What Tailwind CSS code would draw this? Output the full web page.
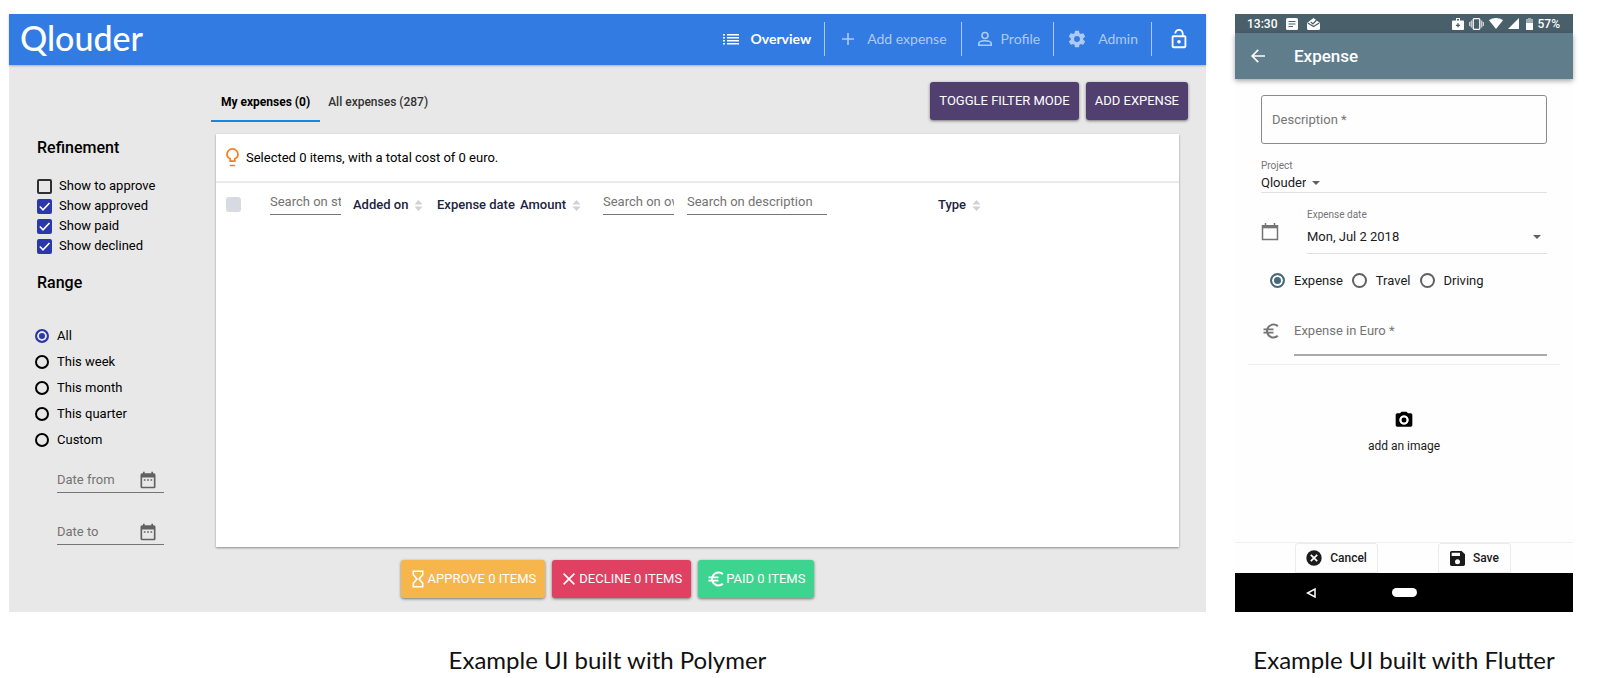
<!DOCTYPE html>
<html lang="en">
<head>
<meta charset="utf-8">
<meta name="viewport" content="width=device-width, initial-scale=1">
<title>Qlouder expenses</title>
<script src="https://cdn.jsdelivr.net/npm/@tailwindcss/browser@4"></script>
</head>
<body class="min-h-screen bg-white font-['Roboto',sans-serif] text-black">
<svg class="hidden" aria-hidden="true">
  <symbol id="sort" viewBox="0 0 10 14"><path d="M5 1 9.5 6h-9zM5 13 .5 8h9z"/></symbol>
  <symbol id="event" viewBox="0 0 24 24"><path d="M9 11H7v2h2v-2zm4 0h-2v2h2v-2zm4 0h-2v2h2v-2zm2-7h-1V2h-2v2H8V2H6v2H5c-1.11 0-1.99.9-1.99 2L3 20a2 2 0 0 0 2 2h14c1.1 0 2-.9 2-2V6c0-1.100-.9-2-2-2zm0 16H5V9h14v11z"/></symbol>
  <symbol id="euro" viewBox="0 0 24 24"><path d="M15 18.500c-2.510 0-4.680-1.420-5.760-3.500H15v-2H8.580c-.05-.33-.08-.66-.08-1s.03-.67.080-1H15V9H9.240C10.320 6.920 12.500 5.500 15 5.500c1.610 0 3.090.59 4.230 1.570L21 5.300C19.410 3.870 17.300 3 15 3c-3.920 0-7.240 2.510-8.480 6H3v2h3.060c-.04.33-.06.66-.06 1s.02.67.06 1H3v2h3.520c1.240 3.490 4.560 6 8.480 6 2.310 0 4.410-.87 6-2.300l-1.780-1.770c-1.130.98-2.600 1.570-4.220 1.570z"/></symbol>
</svg>

<main class="grid grid-cols-[1197fr_338fr] gap-x-[29px] pl-[9px] pr-[27px] pt-[14px]">
  <figure class="flex min-w-0 flex-col">
    <div class="flex min-h-[598px] flex-col bg-[#e8e8e8]">
      <header class="flex h-[51px] items-center justify-between bg-[#327be3] pb-[2px] pl-[11px] pr-4 shadow-[0_1px_2px_rgba(0,0,0,0.25)]">
        <a href="#" class="pb-[2px] font-['Lato',sans-serif] text-[34px] leading-none font-medium text-white">Qlouder</a>
        <nav class="flex items-center font-['Lato',sans-serif] text-sm text-white/60">
          <a href="#" class="flex items-center gap-[10px] pr-[13px] font-bold text-white">
            <svg class="size-[18px]" viewBox="0 0 18 18" fill="currentColor"><path d="M1 4h2v1.500H1zM5 4h12v1.500H5zM1 7h2v1.500H1zM5 7h12v1.500H5zM1 10h2v1.500H1zM5 10h12v1.500H5zM1 13h2v1.500H1zM5 13h12v1.500H5z"/></svg>Overview</a>
          <a href="#" class="flex h-[34px] items-center gap-3 border-l border-white/60 pr-[14px] pl-4">
            <svg class="size-[14px]" viewBox="0 0 14 14" fill="none" stroke="currentColor" stroke-width="1.600"><path d="M7 1v12M1 7h12"/></svg>Add expense</a>
          <a href="#" class="flex h-[34px] items-center gap-[7px] border-l border-white/60 pr-[13px] pl-[14px]">
            <svg class="size-[18px]" viewBox="0 0 18 18" fill="none" stroke="currentColor" stroke-width="1.600"><circle cx="9" cy="5.500" r="3"/><path d="M2.800 15.200v-1.700c0-2.100 4.100-2.700 6.200-2.700s6.200.6 6.200 2.700v1.700z"/></svg>Profile</a>
          <a href="#" class="flex h-[34px] items-center gap-[11px] border-l border-white/60 pr-[13px] pl-[13px]">
            <svg class="size-5" viewBox="0 0 24 24" fill="currentColor"><path d="M19.430 12.980c.04-.32.07-.64.070-.98s-.03-.66-.07-.98l2.110-1.650c.19-.15.24-.42.120-.64l-2-3.460c-.12-.22-.39-.3-.61-.22l-2.490 1c-.52-.4-1.080-.73-1.690-.98l-.38-2.650A.488.488 0 0 0 14 2h-4c-.25 0-.46.18-.49.420l-.38 2.650c-.61.25-1.170.59-1.690.98l-2.490-1c-.23-.09-.49 0-.61.220l-2 3.460c-.13.22-.07.49.120.64l2.110 1.650c-.04.32-.07.65-.07.980s.03.66.070.980l-2.110 1.650c-.19.15-.24.42-.12.640l2 3.460c.12.22.39.3.610.22l2.490-1c.52.4 1.080.73 1.690.98l.38 2.650c.03.24.24.420.49.420h4c.25 0 .46-.18.490-.42l.38-2.650c.61-.25 1.170-.59 1.690-.98l2.490 1c.23.09.49 0 .61-.22l2-3.460c.12-.22.07-.49-.12-.64l-2.110-1.650zM12 15.500a3.500 3.500 0 1 1 0-7 3.500 3.500 0 0 1 0 7z"/></svg>Admin</a>
          <a href="#" aria-label="Log out" class="flex h-[34px] items-center border-l border-white/60 pl-[16px] text-white">
            <svg class="size-[22px]" viewBox="0 0 24 24" fill="currentColor"><path d="M12 17a2 2 0 1 0 0-4 2 2 0 0 0 0 4zm6-9h-1V6c0-2.760-2.240-5-5-5S7 3.240 7 6h1.900c0-1.710 1.390-3.100 3.100-3.100s3.100 1.390 3.100 3.100v2H6c-1.100 0-2 .9-2 2v10c0 1.100.9 2 2 2h12c1.100 0 2-.9 2-2V10c0-1.100-.9-2-2-2zm0 12H6V10h12v10z"/></svg></a>
        </nav>
      </header>

      <div class="grid flex-1 grid-cols-[207px_1fr]">
        <aside class="pt-[72px] pl-[28px] text-[13px]">
          <fieldset>
            <legend class="text-base leading-[22px] font-medium">Refinement</legend>
            <div class="mt-[17px] flex flex-col">
              <label class="flex h-5 items-center gap-[7px]"><input type="checkbox" class="size-[15px] appearance-none rounded-[2px] border-2 border-black/80">Show to approve</label>
              <label class="flex h-5 items-center gap-[7px]"><span class="grid size-[15px]"><input type="checkbox" checked class="col-start-1 row-start-1 size-[15px] appearance-none rounded-[2px] bg-[#2b38ac]"><svg class="pointer-events-none col-start-1 row-start-1 size-[15px]" viewBox="0 0 15 15" fill="none" stroke="#fff" stroke-width="1.600"><path d="m2.800 7.500 3.200 3.300L12.500 4"/></svg></span>Show approved</label>
              <label class="flex h-5 items-center gap-[7px]"><span class="grid size-[15px]"><input type="checkbox" checked class="col-start-1 row-start-1 size-[15px] appearance-none rounded-[2px] bg-[#2b38ac]"><svg class="pointer-events-none col-start-1 row-start-1 size-[15px]" viewBox="0 0 15 15" fill="none" stroke="#fff" stroke-width="1.600"><path d="m2.800 7.500 3.200 3.300L12.500 4"/></svg></span>Show paid</label>
              <label class="flex h-5 items-center gap-[7px]"><span class="grid size-[15px]"><input type="checkbox" checked class="col-start-1 row-start-1 size-[15px] appearance-none rounded-[2px] bg-[#2b38ac]"><svg class="pointer-events-none col-start-1 row-start-1 size-[15px]" viewBox="0 0 15 15" fill="none" stroke="#fff" stroke-width="1.600"><path d="m2.800 7.500 3.200 3.300L12.500 4"/></svg></span>Show declined</label>
            </div>
          </fieldset>
          <fieldset class="mt-4">
            <legend class="text-base leading-[22px] font-medium">Range</legend>
            <div class="-ml-[2px] mt-[29px] flex flex-col">
              <label class="flex h-[26px] items-center gap-2"><input type="radio" name="range" checked class="size-[14px] appearance-none rounded-full border-2 border-[#2b38ac] bg-[#2b38ac] shadow-[inset_0_0_0_2px_#e8e8e8]">All</label>
              <label class="flex h-[26px] items-center gap-2"><input type="radio" name="range" class="size-[14px] appearance-none rounded-full border-2 border-black">This week</label>
              <label class="flex h-[26px] items-center gap-2"><input type="radio" name="range" class="size-[14px] appearance-none rounded-full border-2 border-black">This month</label>
              <label class="flex h-[26px] items-center gap-2"><input type="radio" name="range" class="size-[14px] appearance-none rounded-full border-2 border-black">This quarter</label>
              <label class="flex h-[26px] items-center gap-2"><input type="radio" name="range" class="size-[14px] appearance-none rounded-full border-2 border-black">Custom</label>
            </div>
          </fieldset>
          <div class="mt-[15px] ml-5 flex w-[107px] flex-col gap-[27px] text-[#666]">
            <label class="flex h-[25px] items-center border-b border-[#757575]"><input type="text" placeholder="Date from" aria-label="Date from" class="min-w-0 flex-1 placeholder:text-[#737373]"><svg class="mr-[6px] size-5 shrink-0" fill="#616161"><use href="#event"/></svg></label>
            <label class="flex h-[25px] items-center border-b border-[#757575]"><input type="text" placeholder="Date to" aria-label="Date to" class="min-w-0 flex-1 placeholder:text-[#737373]"><svg class="mr-[6px] size-5 shrink-0" fill="#616161"><use href="#event"/></svg></label>
          </div>
        </aside>

        <section class="flex min-w-0 flex-col pr-[27px]">
          <div class="-mr-[9px] -ml-[5px] flex items-start justify-between pt-[17px]">
            <div role="tablist" class="flex text-[12px] font-medium text-[#333]">
              <button role="tab" aria-selected="true" class="h-10 border-b-2 border-[#1a87dc] px-[10px] pt-[2px] font-bold text-black">My expenses (0)</button>
              <button role="tab" aria-selected="false" class="h-10 border-b-2 border-transparent px-2 pt-[2px]">All expenses (287)</button>
            </div>
            <div class="flex gap-[7px] text-[13px] text-white">
              <button class="h-[38px] rounded-[3px] bg-[#51406f] px-[9px] shadow-[0_1px_3px_rgba(0,0,0,0.5)]">TOGGLE FILTER MODE</button>
              <button class="h-[38px] rounded-[3px] bg-[#51406f] px-[9px] shadow-[0_1px_3px_rgba(0,0,0,0.5)]">ADD EXPENSE</button>
            </div>
          </div>
          <div class="mt-3 flex flex-1 flex-col bg-white shadow-[0_1px_2px_rgba(0,0,0,0.4)]">
            <p class="flex h-[49px] items-center gap-[7px] border-b-2 border-[#ebebed] pl-[10px] text-[13px]">
              <svg class="h-[19px] w-[13px]" viewBox="0 0 13 19" fill="none" stroke="#fb7a1c" stroke-width="1.700"><path d="M4.200 13.200v-2.400C2.300 9.800 1 8.400 1 6.400a5.500 5.500 0 0 1 11 0c0 2-1.300 3.400-3.200 4.400v2.400zM3.800 17.500h5.400"/></svg>
              Selected 0 items, with a total cost of 0 euro.</p>
            <table class="w-full table-fixed text-left text-[13px] text-[#1c2440]">
              <colgroup><col class="w-[54px]"><col class="w-[83px]"><col class="w-[84px]"><col class="w-[83px]"><col class="w-[83px]"><col class="w-[84px]"><col class="w-[251px]"><col></colgroup>
              <thead>
                <tr class="h-[42px]">
                  <th class="pl-[10px]"><input type="checkbox" aria-label="Select all" class="block size-[15px] appearance-none rounded-[3px] bg-[#d7dbe1]"></th>
                  <th><input type="text" placeholder="Search on status" aria-label="Search on status" class="block h-[22px] w-[71px] border-b border-[#777] pb-1 text-[13px] font-normal placeholder:text-[#737373]"></th>
                  <th class="pt-[2px] font-medium"><span class="flex items-center gap-[6px]">Added on<svg class="h-[13px] w-[9px]" fill="#cfd1d5"><use href="#sort"/></svg></span></th>
                  <th class="pt-[2px] font-medium whitespace-nowrap">Expense date</th>
                  <th class="pt-[2px] font-medium"><span class="flex items-center gap-[6px]">Amount<svg class="h-[13px] w-[9px]" fill="#cfd1d5"><use href="#sort"/></svg></span></th>
                  <th><input type="text" placeholder="Search on owner" aria-label="Search on owner" class="block h-[22px] w-[71px] border-b border-[#777] pb-1 text-[13px] font-normal placeholder:text-[#737373]"></th>
                  <th><input type="text" placeholder="Search on description" aria-label="Search on description" class="block h-[22px] w-[140px] border-b border-[#777] pb-1 text-[13px] font-normal placeholder:text-[#737373]"></th>
                  <th class="pt-[2px] font-medium"><span class="flex items-center gap-[6px]">Type<svg class="h-[13px] w-[9px]" fill="#cfd1d5"><use href="#sort"/></svg></span></th>
                </tr>
              </thead>
            </table>
          </div>
        </section>
      </div>

      <div class="flex justify-center gap-[7px] pt-[13px] pb-[14px] text-[13px] text-white">
        <button class="flex h-[38px] items-center gap-1 rounded-[3px] bg-[#f7b64c] pr-[9px] pl-[11px] shadow-[0_1px_3px_rgba(0,0,0,0.5)]"><svg class="h-[18px] w-3" viewBox="0 0 12 18" fill="none" stroke="currentColor" stroke-width="1.600"><path d="M1.300 1.200h9.400v3.600L7.100 9l3.600 4.200v3.600H1.300v-3.600L4.900 9 1.300 4.800z"/></svg>APPROVE 0 ITEMS</button>
        <button class="flex h-[38px] items-center gap-1 rounded-[3px] bg-[#e04062] pr-[9px] pl-[11px] shadow-[0_1px_3px_rgba(0,0,0,0.5)]"><svg class="size-3" viewBox="0 0 12 12" fill="none" stroke="currentColor" stroke-width="1.600"><path d="m.6.6 10.800 10.800M11.400.6.6 11.400"/></svg>DECLINE 0 ITEMS</button>
        <button class="flex h-[38px] items-center rounded-[3px] bg-[#3cd48f] pr-[9px] pl-2 shadow-[0_1px_3px_rgba(0,0,0,0.5)]"><svg class="size-5" fill="currentColor"><use href="#euro"/></svg>PAID 0 ITEMS</button>
      </div>
    </div>
    <figcaption class="pt-8 text-center font-['Lato',sans-serif] text-2xl text-[#111]">Example UI built with Polymer</figcaption>
  </figure>

  <figure class="flex min-w-0 flex-col">
    <div class="flex min-h-[598px] flex-col bg-[#fefefe] text-[13px] text-[#1b1b1b]">
      <div class="flex h-[19px] items-center justify-between bg-[#495f6a] pr-[13px] pl-3 text-xs font-medium text-white">
        <span class="flex items-center gap-[9px]">13:30
          <svg class="size-3" viewBox="0 0 12 12"><rect width="12" height="12" rx="1.500" fill="#fff"/><path d="M2.500 3.500h7M2.500 6h7M2.500 8.500h4.500" stroke="#495f6a" stroke-width="1.200"/></svg>
          <svg class="h-3 w-[13px]" viewBox="0 0 13 12"><path d="M0 5 6.500 0 13 5v5.500c0 .8-.6 1.500-1.400 1.500H1.400C.6 12 0 11.300 0 10.500z" fill="#fff"/><path d="m.8 5 5.700 3.600L12.200 5M3.800 4l2.200 2 3.600-4" fill="none" stroke="#495f6a" stroke-width="1.200"/></svg>
        </span>
        <span class="flex items-center gap-[5px]">
          <svg class="h-3 w-3" viewBox="0 0 12 12" fill="#fff"><path fill-rule="evenodd" d="M4 0h4v2.500h3a1 1 0 0 1 1 1V11a1 1 0 0 1-1 1H1a1 1 0 0 1-1-1V3.500a1 1 0 0 1 1-1h3zM5 1v1.500h2V1zM5.300 5.300v1.400H3.900v1.200h1.400v1.400h1.400V7.900h1.400V6.700H6.700V5.300z"/></svg>
          <svg class="h-3 w-[15px]" viewBox="0 0 15 12" fill="none" stroke="#fff" stroke-width="1.300"><rect x="4.200" y=".7" width="6.600" height="10.600" rx="1"/><path d="M2.300 2.500v7M12.700 2.500v7M.6 4v4M14.400 4v4" opacity=".7"/></svg>
          <svg class="h-[11px] w-[14px]" viewBox="0 0 14 11" fill="#fff"><path d="M0 2.300C4-.7 10-.7 14 2.300L7 11z"/></svg>
          <svg class="size-[11px]" viewBox="0 0 11 11" fill="#fff"><path d="M11 0v11H0z"/></svg>
          <svg class="ml-[2px] h-3 w-[7px]" viewBox="0 0 7 12" fill="#fff"><path d="M2 0h3v1h2v4H0V1h2z" opacity=".5"/><path d="M0 5h7v7H0z"/></svg>
          57%</span>
      </div>
      <header class="flex h-[46px] items-center gap-[29px] bg-[#607d8b] pl-4 text-white shadow-[0_2px_5px_rgba(0,0,0,0.35)]">
        <button aria-label="Back"><svg class="block size-[14px]" viewBox="0 0 14 14" fill="none" stroke="currentColor" stroke-width="1.700"><path d="M14 7H1.500M7.200.8 1.200 7l6 6.200"/></svg></button>
        <h1 class="pt-[2px] text-[17px] font-medium">Expense</h1>
      </header>

      <form class="flex flex-1 flex-col">
        <div class="px-[26px] pt-4">
          <input type="text" placeholder="Description *" aria-label="Description" class="block h-[49px] w-full rounded-[3px] border border-[#8a8a8a] px-[10px] placeholder:text-[#757575]">
          <label for="project" class="mt-4 block text-[10px] leading-3 text-[#757575]">Project</label>
          <div class="flex h-[21px] items-center gap-[6px] border-b border-[#e0e0e0] pt-[2px]">
            <select id="project" class="field-sizing-content appearance-none text-[13px]"><option>Qlouder</option></select>
            <svg class="pointer-events-none h-1 w-2" viewBox="0 0 8 4" fill="#616161"><path d="M0 0h8L4 4z"/></svg>
          </div>
          <div class="mt-4 flex items-center gap-7">
            <svg class="size-[18px] shrink-0" viewBox="0 0 18 18" fill="none" stroke="#757575" stroke-width="1.500"><path d="M1.500 2.800h15v13.700h-15z"/><path d="M1.500 3.800h15" stroke-width="3"/><path d="M4.500 0v3M13.500 0v3"/></svg>
            <div class="min-w-0 flex-1 border-b border-[#e0e0e0]">
              <label for="date" class="block text-[10px] leading-3 text-[#757575]">Expense date</label>
              <div class="flex h-8 items-center pr-[6px]">
                <select id="date" class="min-w-0 flex-1 appearance-none text-[13px]"><option>Mon, Jul 2 2018</option></select>
                <svg class="pointer-events-none h-1 w-2" viewBox="0 0 8 4" fill="#616161"><path d="M0 0h8L4 4z"/></svg>
              </div>
            </div>
          </div>
          <div class="mt-[17px] flex items-center gap-[9px] pl-[9px]">
            <label class="flex items-center gap-[9px]"><input type="radio" name="kind" checked class="size-[15px] appearance-none rounded-full border-2 border-[#48697a] bg-[#48697a] shadow-[inset_0_0_0_2px_#fff]">Expense</label>
            <label class="flex items-center gap-[9px]"><input type="radio" name="kind" class="size-[15px] appearance-none rounded-full border-2 border-[#616161]">Travel</label>
            <label class="flex items-center gap-[9px]"><input type="radio" name="kind" class="size-[15px] appearance-none rounded-full border-2 border-[#616161]">Driving</label>
          </div>
          <div class="mt-4 flex items-center gap-[13px]">
            <svg class="size-5 shrink-0" fill="#757575"><use href="#euro"/></svg>
            <input type="text" placeholder="Expense in Euro *" aria-label="Expense in Euro" class="h-[49px] min-w-0 flex-1 border-b-2 border-[#aaa] placeholder:text-[#757575]">
          </div>
        </div>
        <hr class="mx-[13px] mt-2 border-[#eeeeee]">
        <button type="button" class="mx-auto mt-[45px] flex flex-col items-center gap-2 text-xs">
          <svg class="size-5" viewBox="0 0 24 24" fill="#000"><path fill-rule="evenodd" d="M9 2 7.170 4H4c-1.100 0-2 .9-2 2v12c0 1.100.9 2 2 2h16c1.100 0 2-.9 2-2V6c0-1.100-.9-2-2-2h-3.170L15 2H9zm3 15.500a5.500 5.500 0 1 1 0-11 5.500 5.500 0 0 1 0 11zm0-2.300a3.200 3.200 0 1 0 0-6.400 3.200 3.200 0 0 0 0 6.400z"/><circle cx="12" cy="12" r="4.300" fill="none" stroke="#fff" stroke-width="2.200"/></svg>
          add an image</button>
        <div class="mt-auto flex justify-center gap-[60px] border-t border-[#f0f0f0] pr-[2px] text-xs font-medium">
          <button type="button" class="flex h-[30px] items-center gap-2 rounded-t-[3px] border border-[#ececec] px-[10px]"><svg class="size-4" viewBox="0 0 16 16"><circle cx="8" cy="8" r="7.700" fill="#1b1b1b"/><path d="m4.800 4.800 6.400 6.400M11.200 4.800l-6.400 6.400" stroke="#fff" stroke-width="1.700"/></svg>Cancel</button>
          <button type="submit" class="flex h-[30px] items-center gap-2 rounded-t-[3px] border border-[#ececec] px-[11px]"><svg class="size-[15px]" viewBox="0 0 18 18" fill="#1b1b1b"><path fill-rule="evenodd" d="M14 0H2C.9 0 0 .9 0 2v14c0 1.100.9 2 2 2h14c1.100 0 2-.9 2-2V4zM9 16a3 3 0 1 1 0-6 3 3 0 0 1 0 6zm3-10H2V2h10z"/></svg>Save</button>
        </div>
      </form>

      <div class="grid h-[39px] grid-cols-[1fr_25px_1fr] items-center bg-black">
        <button aria-label="Back" class="mr-[76px] justify-self-end"><svg class="block size-[10px]" viewBox="0 0 10 10" fill="none" stroke="#fff" stroke-width="1.500"><path d="M9 1v8L1.500 5z"/></svg></button>
        <button aria-label="Home" class="h-[9px] rounded-full bg-white"></button>
      </div>
    </div>
    <figcaption class="pt-8 text-center font-['Lato',sans-serif] text-2xl whitespace-nowrap text-[#111]">Example UI built with Flutter</figcaption>
  </figure>
</main>
</body>
</html>
